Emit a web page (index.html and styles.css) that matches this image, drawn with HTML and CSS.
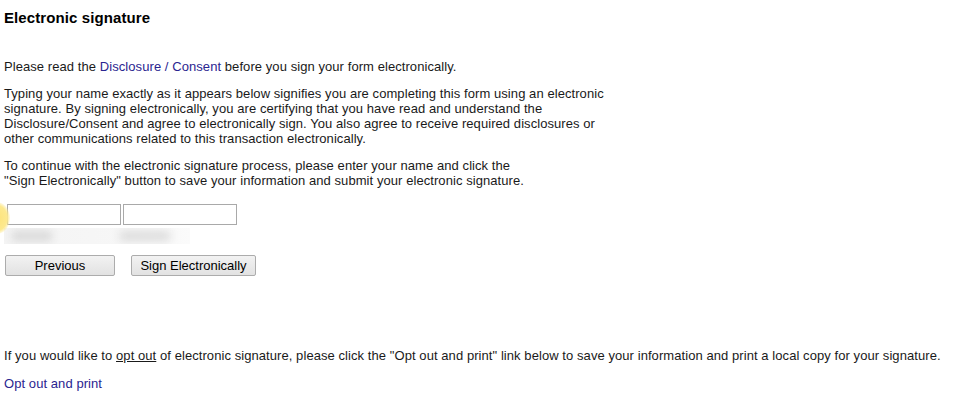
FILE: index.html
```html
<!DOCTYPE html>
<html>
<head>
<meta charset="utf-8">
<title>Electronic signature</title>
<link rel="stylesheet" href="styles.css">
</head>
<body>
<div class="page">
  <h1 class="title">Electronic signature</h1>
  <p class="para first">Please read the <a class="link" href="#">Disclosure / Consent</a> before you sign your form electronically.</p>
  <p class="para wide">Typing your name exactly as it appears below signifies you are completing this form using an electronic signature. By signing electronically, you are certifying that you have read and understand the Disclosure/Consent and agree to electronically sign. You also agree to receive required disclosures or other communications related to this transaction electronically.</p>
  <p class="para">To continue with the electronic signature process, please enter your name and click the<br>"Sign Electronically" button to save your information and submit your electronic signature.</p>

  <div class="sign">
    <span class="glow"></span>
    <div class="inputs">
      <input class="field" type="text">
      <input class="field" type="text">
    </div>
    <div class="blurred">
      <span class="blob b1"></span>
      <span class="blob b2"></span>
    </div>
  </div>

  <div class="buttons">
    <button class="btn prev" type="button">Previous</button>
    <button class="btn sign-btn" type="button">Sign Electronically</button>
  </div>

  <p class="para optout">If you would like to <u>opt out</u> of electronic signature, please click the "Opt out and print" link below to save your information and print a local copy for your signature.</p>
  <p class="para last"><a class="link" href="#">Opt out and print</a></p>
</div>
</body>
</html>
```

FILE: styles.css
```css
html, body {
  margin: 0;
  padding: 0;
  background: #ffffff;
}

.page {
  padding: 0 4px;
  font-family: "Liberation Sans", Arial, sans-serif;
  font-size: 13px;
  line-height: 15px;
  letter-spacing: 0.07px;
  color: #1a1a1a;
}

.title {
  font-size: 15px;
  font-weight: bold;
  line-height: 16px;
  letter-spacing: 0.1px;
  margin: 10px 0 0 0;
  color: #000;
}

.para {
  margin: 12px 0 0 0;
}

.para.first {
  margin-top: 33px;
}

.para.wide {
  width: 612px;
}

.link {
  color: #2a2590;
  text-decoration: none;
}

.sign {
  position: relative;
  margin-top: 16px;
}

.glow {
  position: absolute;
  left: -20px;
  top: -2px;
  width: 26px;
  height: 32px;
  border-radius: 50%;
  background: radial-gradient(ellipse at center, #fde37a 0%, #fde98f 55%, rgba(253, 236, 160, 0) 75%);
}

.inputs {
  display: flex;
  gap: 2px;
  padding-left: 3px;
}

.field {
  width: 114px;
  height: 21px;
  box-sizing: border-box;
  border: 1px solid #a9a9a9;
  margin: 0;
  padding: 0 2px;
  background: #fff;
}

.blurred {
  display: flex;
  height: 16px;
  margin-top: 3px;
  overflow: hidden;
  width: 186px;
  background: linear-gradient(90deg, #f4f4f4, #f7f7f7 70%, #fbfbfb);
}

.blob {
  display: block;
  height: 10px;
  margin-top: 3px;
  background: #d9d9d9;
  filter: blur(4px);
}

.b1 {
  width: 40px;
  margin-left: 8px;
}

.b2 {
  width: 50px;
  margin-left: 68px;
  background: #dcdcdc;
}

.buttons {
  display: flex;
  gap: 16px;
  margin-top: 11px;
  padding-left: 1px;
}

.btn {
  height: 21px;
  box-sizing: border-box;
  margin: 0;
  padding: 0 6px;
  border: 1px solid #acacac;
  border-radius: 2px;
  background: linear-gradient(#f2f2f2, #e2e2e2);
  font-family: "Liberation Sans", Arial, sans-serif;
  font-size: 13px;
  color: #000;
}

.prev {
  width: 110px;
}

.sign-btn {
  width: 125px;
}

.para.optout {
  margin-top: 72px;
}

.para.last {
  margin-top: 13px;
}
```
